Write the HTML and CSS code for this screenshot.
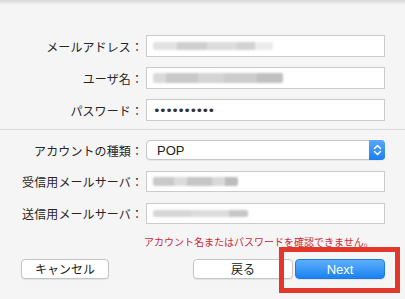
FILE: index.html
```html
<!DOCTYPE html>
<html lang="ja">
<head>
<meta charset="utf-8">
<link rel="stylesheet" href="styles.css">
</head>
<body>
<div class="top-shadow"></div>
<div class="panel">
  <div class="grid grid-a">
    <label class="lbl">メールアドレス：</label>
    <div class="field"><span class="blur b1"></span></div>
    <label class="lbl">ユーザ名：</label>
    <div class="field"><span class="blur b2"></span></div>
    <label class="lbl">パスワード：</label>
    <div class="field"><span class="dots">••••••••••</span></div>
  </div>
  <div class="sep"></div>
  <div class="grid grid-b">
    <label class="lbl">アカウントの種類：</label>
    <div class="select"><span class="sel-val">POP</span><span class="stepper"><svg width="9" height="12" viewBox="0 0 9 12"><path d="M1.5 4.5 L4.5 1.5 L7.5 4.5 M1.5 7.5 L4.5 10.5 L7.5 7.5" fill="none" stroke="#fff" stroke-width="1.5" stroke-linecap="round" stroke-linejoin="round"/></svg></span></div>
    <label class="lbl">受信用メールサーバ：</label>
    <div class="field"><span class="blur b3"></span></div>
    <label class="lbl">送信用メールサーバ：</label>
    <div class="field"><span class="blur b4"></span></div>
  </div>
  <p class="error">アカウント名またはパスワードを確認できません。</p>
  <div class="buttons">
    <button class="btn cancel">キャンセル</button>
    <div class="right">
      <button class="btn back">戻る</button>
      <div class="next-wrap">
        <button class="btn next">Next</button>
        <span class="highlight"></span>
      </div>
    </div>
  </div>
</div>
</body>
</html>
```
FILE: styles.css
```css
* { box-sizing: border-box; }
html, body { margin: 0; padding: 0; }
body {
  width: 405px;
  height: 299px;
  overflow: hidden;
  background: #f5f5f5;
  font-family: "Liberation Sans", "Noto Sans CJK JP", sans-serif;
  color: #222;
}
.top-shadow {
  height: 5px;
  background: linear-gradient(#d6d6d6, #f5f5f5);
}
.panel {
  display: flex;
  flex-direction: column;
}
.grid {
  display: grid;
  grid-template-columns: 140px 239px;
  column-gap: 6px;
  align-items: center;
}
.grid-a {
  margin-top: 30px;
  grid-auto-rows: 22px;
  row-gap: 10px;
}
.grid-b {
  margin-top: 10px;
  grid-template-rows: 20px 21px 21px;
  row-gap: 11px;
}
.lbl {
  text-align: right;
  font-family: "Noto Sans CJK JP", sans-serif;
  font-size: 12px;
  letter-spacing: 0.1px;
  color: #262626;
  white-space: nowrap;
  margin-right: -3px;
}
.field {
  height: 100%;
  background: #fff;
  border: 1px solid #cbcbcb;
  display: flex;
  align-items: center;
  padding-left: 6px;
  overflow: hidden;
}
.blur {
  display: block;
  height: 8px;
  filter: blur(1.2px);
  border-radius: 2px;
}
.b1 { width: 120px; background: linear-gradient(90deg, #e2e2e2 0 20%, #cfcfcf 20% 45%, #dcdcdc 45% 70%, #d2d2d2 70% 85%, #ececec 85%); }
.b2 { width: 130px; height: 10px; background: linear-gradient(90deg, #dadada 0 10%, #c8c8c8 10% 35%, #d4d4d4 35% 55%, #cccccc 55% 80%, #c0c0c0 80%); }
.b3 { width: 85px; height: 9px; background: linear-gradient(90deg, #c9c9c9 0 25%, #dcdcdc 25% 40%, #c6c6c6 40% 70%, #d9d9d9 70% 85%, #bcbcbc 85%); }
.b4 { width: 95px; height: 7px; background: linear-gradient(90deg, #d6d6d6 0 40%, #dcdcdc 40% 80%, #c6c6c6 80%); }
.dots {
  font-size: 13px;
  letter-spacing: -1.6px;
  color: #333;
  font-family: "DejaVu Sans", sans-serif;
  padding-left: 0;
}
.sep {
  margin-top: 8px;
  height: 1px;
  background: #dcdcdc;
}
.select {
  height: 100%;
  background: #fff;
  border: 1px solid #c6c6c6;
  border-radius: 4px;
  display: flex;
  align-items: center;
  justify-content: space-between;
  box-shadow: 0 1px 0 rgba(0,0,0,0.05);
}
.sel-val {
  padding-left: 10px;
  font-size: 13px;
  color: #222;
}
.stepper {
  width: 16px;
  height: 20px;
  margin: -1px -1px -1px 0;
  background: linear-gradient(#5aa9f8, #1a7ef0);
  border-radius: 0 4px 4px 0;
  display: flex;
  align-items: center;
  justify-content: center;
}
.error {
  margin: 11px 0 0 144px;
  font-family: "Noto Sans CJK JP", sans-serif;
  font-size: 10px;
  line-height: 14px;
  color: #c8293a;
  white-space: nowrap;
}
.buttons {
  margin-top: 10px;
  display: flex;
  justify-content: space-between;
  align-items: center;
  padding: 0 20px 0 21px;
}
.right {
  display: flex;
  gap: 2px;
  align-items: center;
}
.btn {
  height: 20px;
  border-radius: 4px;
  font-family: "Noto Sans CJK JP", sans-serif;
  font-size: 12px;
  line-height: 1;
  padding: 0;
  color: #222;
  background: #fff;
  border: 1px solid #c4c4c4;
  box-shadow: 0 1px 1px rgba(0,0,0,0.08);
}
.cancel { width: 88px; }
.back { width: 100px; }
.next-wrap {
  position: relative;
}
.next {
  display: block;
  width: 90px;
  font-family: "Liberation Sans", sans-serif;
  font-size: 13px;
  color: #fff;
  border: 1px solid #1d7ae6;
  background: linear-gradient(#5db0fb, #1b82f2);
}
.highlight {
  position: absolute;
  top: -12px;
  left: -16px;
  right: -15px;
  bottom: -14px;
  border: 5px solid #e3372b;
  pointer-events: none;
}
```
